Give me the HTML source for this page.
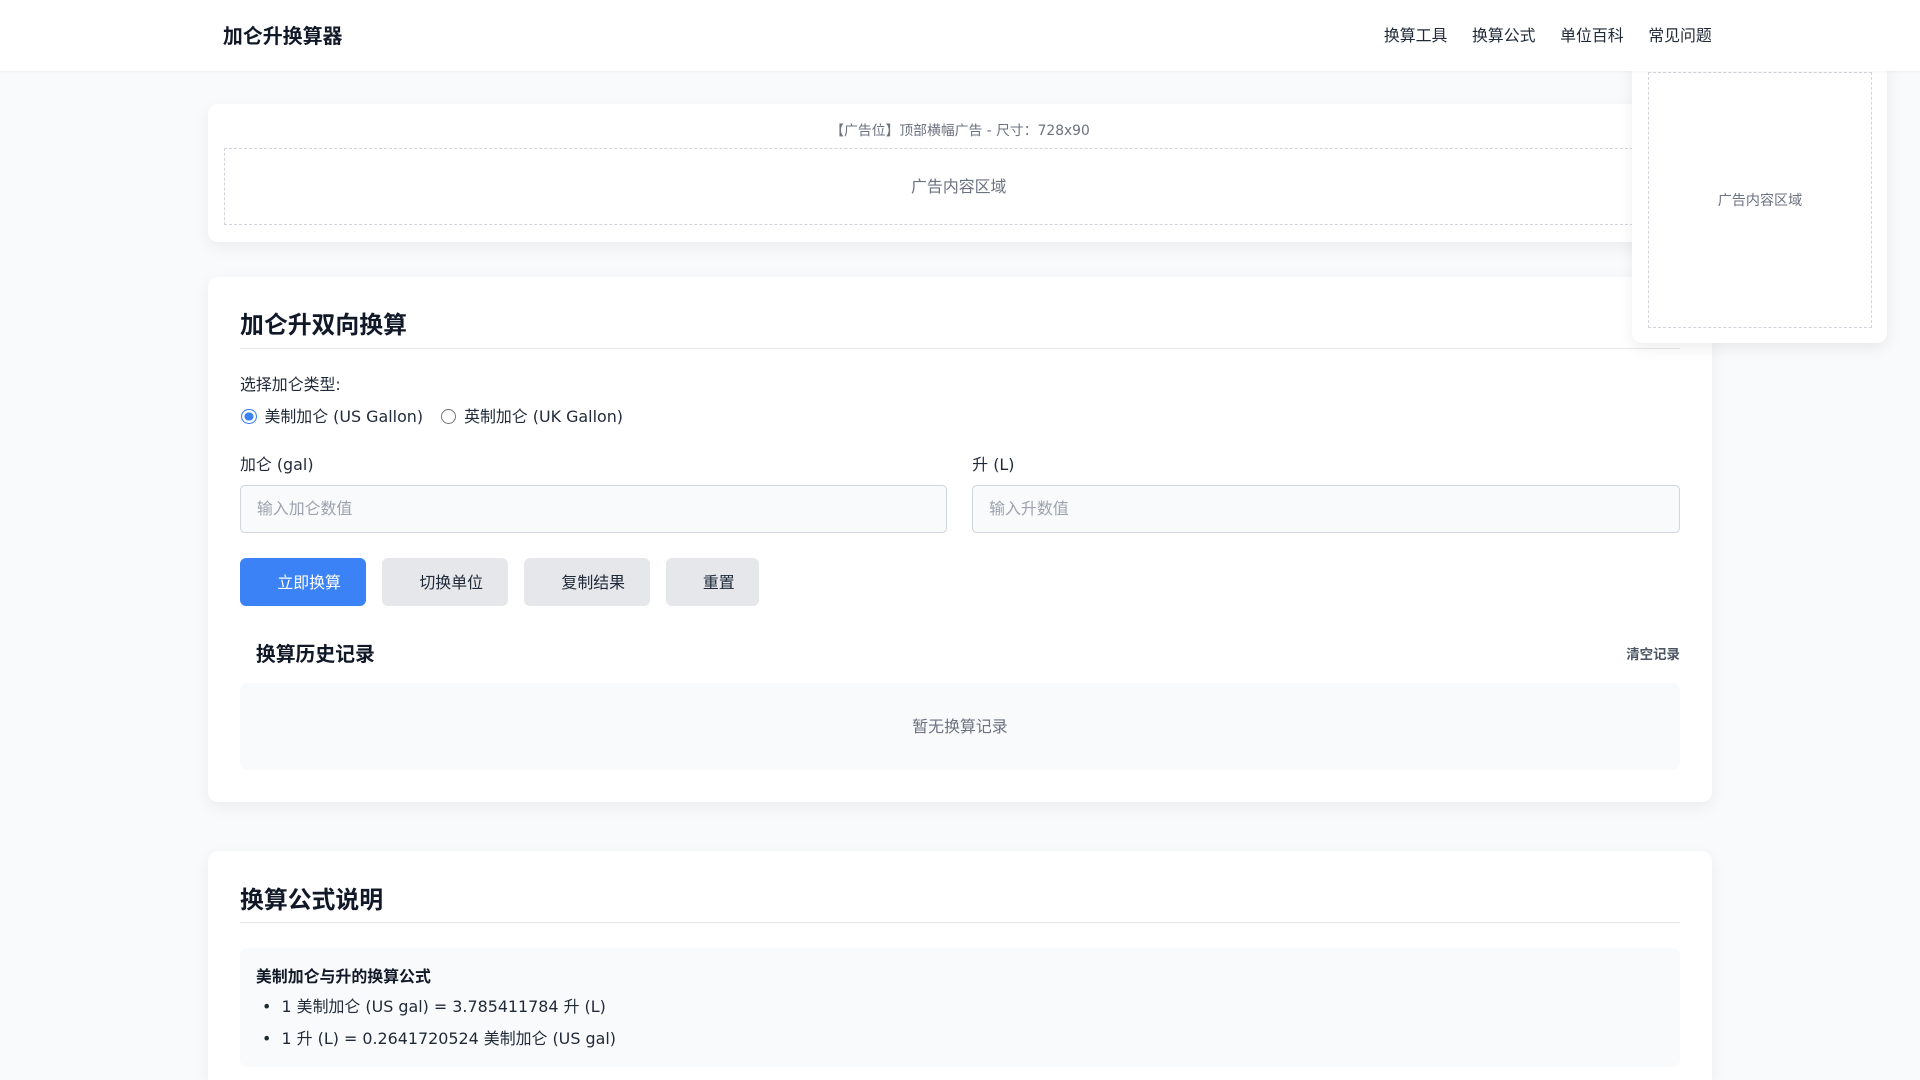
<!DOCTYPE html>
<html><head><meta charset="utf-8">
<style>
html{zoom:1.22449;overflow:hidden}
body{margin:0;background:#f9fafb;font-family:"DejaVu Sans","Liberation Sans","Noto Sans CJK SC",sans-serif;color:#1f2937;width:1568px;height:882px;overflow:hidden;position:relative}
.hdr{position:absolute;left:0;top:0;width:1568px;height:58px;background:#fff;box-shadow:0 1px 3px rgba(0,0,0,.06);z-index:5}
.logo{position:absolute;left:182px;top:16px;font-size:16.3px;font-weight:bold;color:#111827}
.nav{position:absolute;right:170px;top:19px;font-size:13px;color:#1f2937}
.nav span{margin-left:20px}
.card{position:absolute;left:170px;width:1228px;background:#fff;border-radius:8px;box-shadow:0 4px 12px rgba(0,0,0,.06)}
.side{position:absolute;left:1333px;top:45px;width:208px;height:235px;background:#fff;border-radius:0 0 8px 8px;box-shadow:0 4px 12px rgba(0,0,0,.07);z-index:4}
.side .in{position:absolute;left:13px;top:14px;width:181px;height:207px;border:1px dashed #d1d5db;font-size:11.5px;color:#6b7280;display:flex;align-items:center;justify-content:center}
.adl{position:absolute;top:12px;width:1228px;text-align:center;font-size:11.3px;color:#6b7280}
.adbox{position:absolute;left:13px;top:36px;width:1200px;height:63px;border:1px dashed #d1d5db;display:flex;align-items:center;justify-content:center;font-size:13px;color:#6b7280;padding-bottom:2px;box-sizing:border-box}
h2{position:absolute;left:26px;margin:0;font-size:19.5px;font-weight:bold;color:#111827}
.line{position:absolute;left:26px;width:1176px;height:1px;background:#e5e7eb}
.t{position:absolute;font-size:13px;white-space:nowrap}
.inp{position:absolute;top:170px;width:576px;height:38px;border:1px solid #d1d5db;border-radius:4px;background:#f9fafb;font-size:13px;color:#9ca3af;line-height:38px;text-indent:13px}
.btn{position:absolute;top:230px;height:39px;border-radius:5px;background:#e5e7eb;font-size:13px;display:flex;align-items:center;justify-content:center;color:#1f2937;padding-left:10px;box-sizing:border-box;padding-bottom:2px}
.radio{position:absolute;width:11px;height:11px;border-radius:50%;border:1px solid #767676;background:#fff}
.radio.on{border-color:#3b82f6;box-shadow:inset 0 0 0 2px #fff;background:#3b82f6}
.hist{position:absolute;left:26px;top:332px;width:1176px;height:71px;background:#f9fafb;border-radius:6px;display:flex;align-items:center;justify-content:center;font-size:13px;color:#6b7280;padding-bottom:2px;box-sizing:border-box}
</style></head><body>
<div class="hdr"><div class="logo">加仑升换算器</div><div class="nav"><span>换算工具</span><span>换算公式</span><span>单位百科</span><span>常见问题</span></div></div>
<div class="side"><div class="in">广告内容区域</div></div>
<div class="card" style="top:85px;height:113px"><div class="adl">【广告位】顶部横幅广告 - 尺寸：728x90</div><div class="adbox">广告内容区域</div></div>
<div class="card" style="top:226px;height:429px">
<h2 style="top:23px">加仑升双向换算</h2>
<div class="line" style="top:58px"></div>
<div class="t" style="left:26px;top:78px">选择加仑类型:</div>
<div class="radio on" style="left:27px;top:108px"></div>
<div class="t" style="left:46px;top:104px">美制加仑 (US Gallon)</div>
<div class="radio" style="left:190px;top:108px"></div>
<div class="t" style="left:209px;top:104px">英制加仑 (UK Gallon)</div>
<div class="t" style="left:26px;top:143px">加仑 (gal)</div>
<div class="t" style="left:624px;top:143px">升 (L)</div>
<div class="inp" style="left:26px">输入加仑数值</div>
<div class="inp" style="left:624px">输入升数值</div>
<div class="btn" style="left:26px;width:103px;background:#3b82f6;color:#fff">立即换算</div>
<div class="btn" style="left:142px;width:103px">切换单位</div>
<div class="btn" style="left:258px;width:103px">复制结果</div>
<div class="btn" style="left:374px;width:76px">重置</div>
<div class="t" style="left:39px;top:295px;font-size:16.2px;font-weight:bold;color:#111827">换算历史记录</div>
<div class="t" style="right:26px;top:299px;font-size:11px;font-weight:bold;color:#4b5563">清空记录</div>
<div class="hist">暂无换算记录</div>
</div>
<div class="card" style="top:695px;height:187px;border-radius:8px 8px 0 0">
<h2 style="top:24px">换算公式说明</h2>
<div class="line" style="top:58px"></div>
<div style="position:absolute;left:26px;top:79px;width:1176px;height:97px;background:#f9fafb;border-radius:6px">
<div class="t" style="left:13px;top:13px;font-size:13px;font-weight:bold;color:#111827">美制加仑与升的换算公式</div>
<div class="t" style="left:18px;top:38px">•&nbsp; 1 美制加仑 (US gal) = 3.785411784 升 (L)</div>
<div class="t" style="left:18px;top:64px">•&nbsp; 1 升 (L) = 0.2641720524 美制加仑 (US gal)</div>
</div></div>
</body></html>
